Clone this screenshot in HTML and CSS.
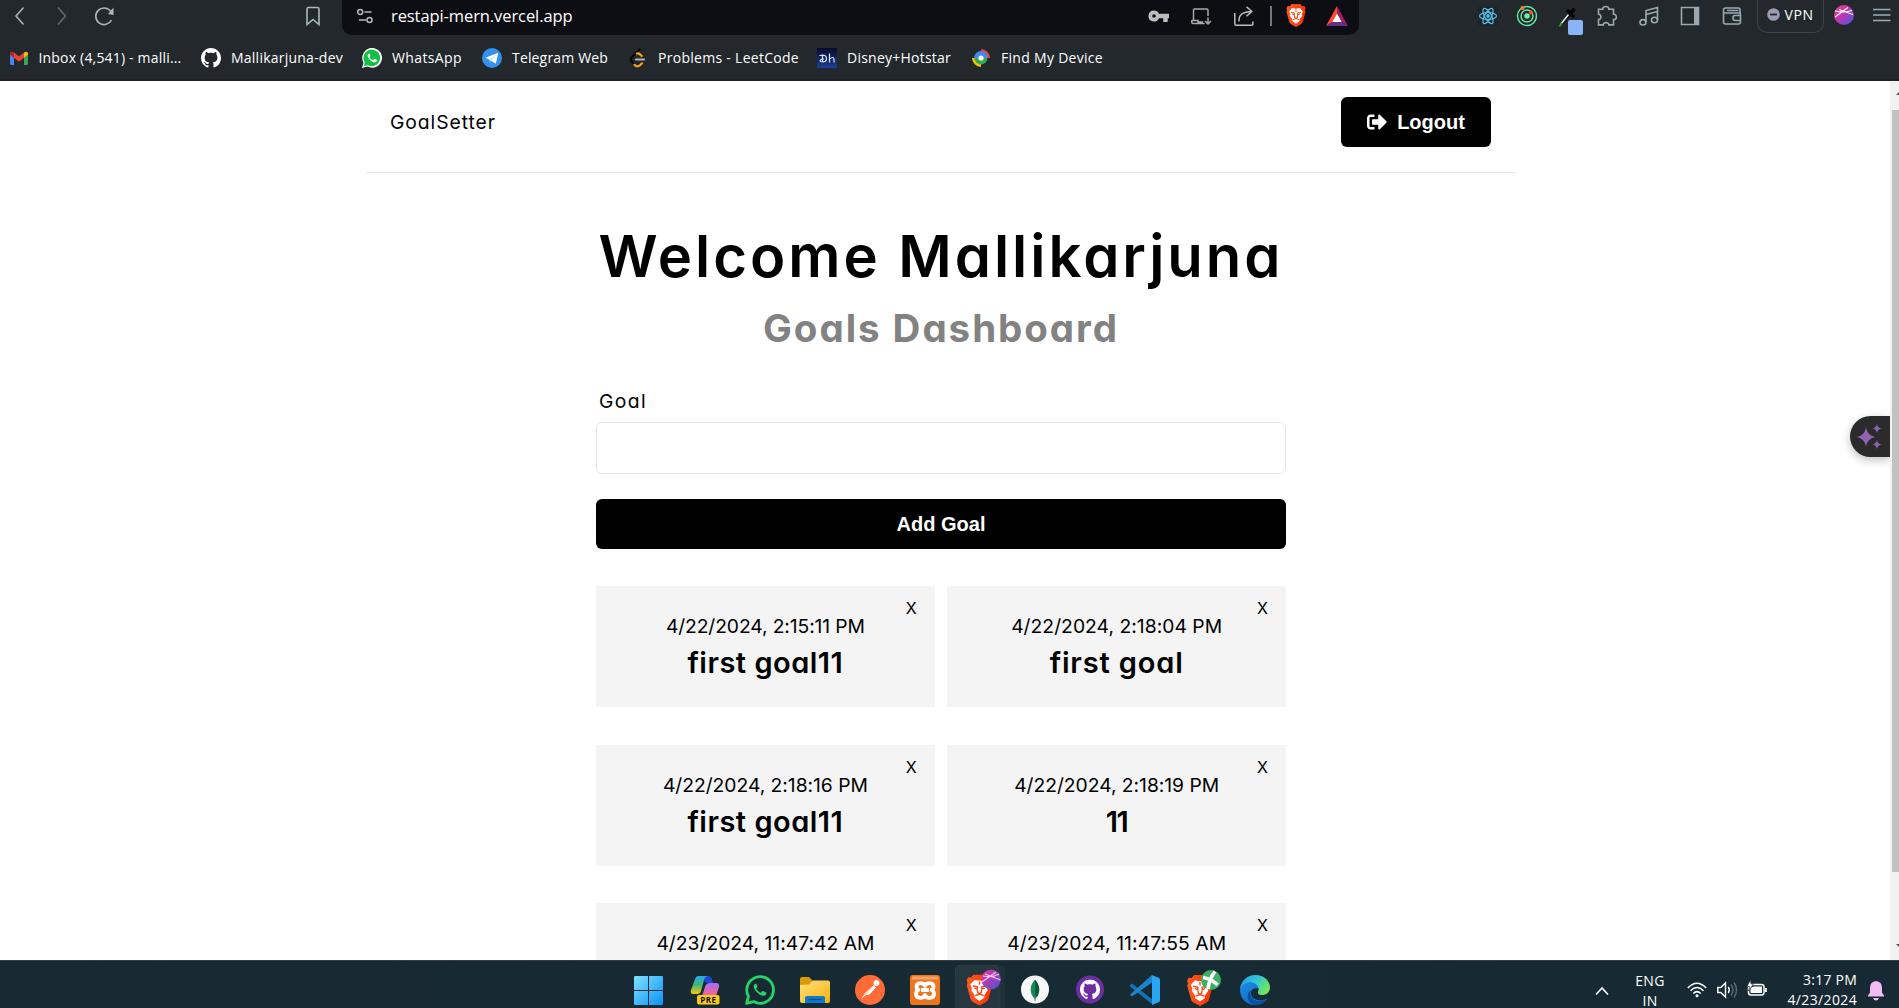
FILE: index.html
```html
<!DOCTYPE html>
<html lang="en">
<head>
<meta charset="utf-8">
<title>Goal Setter</title>
<link rel="stylesheet" href="styles.css">
</head>
<body>
<svg class="defs" width="0" height="0">
  <defs>
    <linearGradient id="braveG" x1="0" x2="1"><stop offset="0" stop-color="#ff5a1f"/><stop offset="1" stop-color="#ff3000"/></linearGradient>
    <linearGradient id="orbG" x1="0" y1="0" x2="1" y2="1"><stop offset=".15" stop-color="#d9369b"/><stop offset=".9" stop-color="#5a50d8"/></linearGradient>
    <linearGradient id="orbT" x1="0" y1="0" x2="1" y2="1"><stop offset="0" stop-color="#f0506a"/><stop offset=".4" stop-color="#cf30a8"/><stop offset="1" stop-color="#3c5ce8"/></linearGradient>
    <linearGradient id="winG" x1="0" y1="0" x2="1" y2="1"><stop offset="0" stop-color="#7fe0ff"/><stop offset="1" stop-color="#0c93f5"/></linearGradient>
    <linearGradient id="folG" x1="0" y1="0" x2="1" y2="1"><stop offset="0" stop-color="#ffe07a"/><stop offset="1" stop-color="#f6b20f"/></linearGradient>
    <linearGradient id="copA" x1="0" y1="0" x2="0" y2="1"><stop offset="0" stop-color="#2aa8f0"/><stop offset=".5" stop-color="#3fb57a"/><stop offset="1" stop-color="#ffc800"/></linearGradient>
    <linearGradient id="copB" x1="0" y1="0" x2="0" y2="1"><stop offset="0" stop-color="#a86af5"/><stop offset="1" stop-color="#f8688a"/></linearGradient>
    <linearGradient id="edgA" x1="0" y1="0" x2="1" y2=".5"><stop offset="0" stop-color="#1d9be6"/><stop offset=".55" stop-color="#35c6d8"/><stop offset="1" stop-color="#6fe65a"/></linearGradient>
    <linearGradient id="edgB" x1="0" y1="0" x2="1" y2="1"><stop offset="0" stop-color="#1b8ee8"/><stop offset="1" stop-color="#0f5cb8"/></linearGradient>
    <linearGradient id="hsG" x1="0" y1="0" x2="0" y2="1"><stop offset="0" stop-color="#070b2a"/><stop offset="1" stop-color="#1c3f96"/></linearGradient>
    <symbol id="github" viewBox="0 0 16 16"><path d="M8 0C3.58 0 0 3.58 0 8c0 3.54 2.29 6.53 5.47 7.59.4.07.55-.17.55-.38 0-.19-.01-.82-.01-1.49-2.01.37-2.53-.49-2.69-.94-.09-.23-.48-.94-.82-1.13-.28-.15-.68-.52-.01-.53.63-.01 1.08.58 1.23.82.72 1.21 1.87.87 2.33.66.07-.52.28-.87.51-1.07-1.78-.2-3.64-.89-3.64-3.95 0-.87.31-1.59.82-2.15-.08-.2-.36-1.02.08-2.12 0 0 .67-.21 2.2.82.64-.18 1.32-.27 2-.27s1.36.09 2 .27c1.53-1.04 2.2-.82 2.2-.82.44 1.1.16 1.92.08 2.12.51.56.82 1.27.82 2.15 0 3.07-1.87 3.75-3.65 3.95.29.25.54.73.54 1.48 0 1.07-.01 1.93-.01 2.2 0 .21.15.46.55.38A8.01 8.01 0 0 0 16 8c0-4.42-3.58-8-8-8z"/></symbol>
    <symbol id="phone" viewBox="0 0 24 24"><path d="M7.2 4.2c-.5-1-.9-1-1.400-1-1 .1-2.800 1.600-2.800 4 0 2 1.300 4.400 4 7.400 3.500 3.800 6.800 5.600 9.600 5.600 2.200 0 4.200-1.600 4.400-3.400.1-.8.1-1-.3-1.300l-4.200-2.100c-.5-.2-.8-.2-1.200.3l-1.500 1.900c-.3.3-.6.4-1 .2-2.400-1-4.700-3-6-5.500-.2-.4-.1-.7.2-1l1.300-1.600c.3-.4.300-.7.100-1.100z"/></symbol>
    <symbol id="lion" viewBox="0 0 20 24">
      <path fill="url(#braveG)" d="M5.500 0h9l2 2.300 2.200-.2 1.300 2.400-.7 2 .6 1.800-3 10.600c-.3 1-1 1.700-1.800 2.300L10 24l-5.100-2.800c-.8-.6-1.500-1.300-1.800-2.300L.1 8.300l.6-1.800L0 4.500l1.300-2.400 2.200.2z"/>
      <path fill="#fff" d="M6 4.200l4 .7 4-.7 3.200 3.600-1.300 2.700.5 1.700-2.800 4 .3 1.600L10 20.500l-3.900-2.700.3-1.600-2.800-4 .5-1.700-1.300-2.700z"/>
      <path fill="none" stroke="#fb4710" stroke-width="1.100" d="M4.800 8.700l3.500.8v1.800l-2.300-.8M15.200 8.700l-3.500.8v1.800l2.300-.8M8.300 11.200l.3 2.800 1.400.9 1.400-.9.3-2.800M6.700 16.300l3.300-1.200 3.300 1.200M10 5.500v2.500"/>
    </symbol>
  </defs>
</svg>

<header class="browser">
  <div class="toolbar">
    <div class="nav">
      <svg width="24" height="24" viewBox="0 0 24 24"><path class="ln lt" d="M15.500 3.500L8 12l7.500 8.500"/></svg>
      <svg class="fwd" width="24" height="24" viewBox="0 0 24 24"><path class="ln dim" d="M8 3.500l7.500 8.500L8 20.500"/></svg>
      <svg class="reload" width="24" height="24" viewBox="0 0 24 24"><path class="ln lt" d="M18.500 7A8.300 8.300 0 1 0 19.500 16"/><path fill="#a9b8c0" d="M21.500 3.500v7.500l-5.500-1z"/></svg>
      <svg class="mark" width="24" height="24" viewBox="0 0 24 24"><path class="ln lt" d="M6 5q0-1.500 1.500-1.500h9q1.500 0 1.500 1.500v15.500l-6-5-6 5z"/></svg>
    </div>
    <div class="address">
      <svg width="18" height="18" viewBox="0 0 18 18" fill="none" stroke="#b9b9bd" stroke-width="1.500"><circle cx="4.200" cy="5" r="2.500"/><path d="M8.500 5h7M3 13h7"/><circle cx="13.500" cy="13" r="2.500"/></svg>
      <span class="url" data-width="181.500">restapi-mern.vercel.app</span>
      <div class="tools">
        <svg width="24" height="24" viewBox="0 0 24 24" fill="#bdbdbd"><path fill-rule="evenodd" d="M7 6.500a5.500 5.500 0 1 0 5 7.700h4.200V18h4.500v-3.800H22V9.800H12A5.500 5.500 0 0 0 7 6.500zm0 3.700a1.800 1.800 0 1 1 0 3.600 1.800 1.800 0 0 1 0-3.600z"/></svg>
        <svg width="24" height="24" viewBox="0 0 24 24" fill="none" stroke="#a9a9ac" stroke-width="1.500"><path d="M4.500 16.500V6q0-1 1-1H18q1 0 1 1v6M3 16.500h6v1.500h5M2.800 16v2.500q0 1 1 1H15.500M19 13.500V19M16 17l3 3 3-3"/></svg>
        <svg width="24" height="24" viewBox="0 0 24 24" fill="none" stroke="#bdbdbd" stroke-width="1.500"><path d="M2.800 9v11q0 1.300 1.300 1.300h15.500q1.300 0 1.300-1.300v-2.500M7 17.500c-.5-6 3-10 13-10M14.500 2.800l5.300 4.700-5.300 4.700"/></svg>
        <i class="sep"></i>
        <svg width="20" height="23"><use href="#lion"/></svg>
        <svg class="bat" width="22" height="20" viewBox="0 0 22 20"><path fill="#ff4a24" d="M11 0L0 20l7.500-4.500L11 8z"/><path fill="#9e1f63" d="M11 0l11 20-7.500-4.500L11 8z"/><path fill="#662d91" d="M0 20h22l-7.500-4.500h-7z"/><path fill="#fff" d="M11 7.500l4.700 8.500H6.300z"/></svg>
      </div>
    </div>
    <div class="ext">
      <svg width="20" height="20" viewBox="0 0 20 20"><rect width="20" height="20" fill="#20232a"/><g fill="none" stroke="#4fb9d9" stroke-width="1.300"><ellipse cx="10" cy="10" rx="8.500" ry="3.300"/><ellipse cx="10" cy="10" rx="8.500" ry="3.300" transform="rotate(60 10 10)"/><ellipse cx="10" cy="10" rx="8.500" ry="3.300" transform="rotate(120 10 10)"/></g><circle cx="10" cy="10" r="1.800" fill="#5cc8ea"/></svg>
      <svg width="22" height="22" viewBox="0 0 22 22" fill="none" stroke="#5ee6a0" stroke-width="1.500"><circle cx="11" cy="11" r="9.500"/><circle cx="11" cy="11" r="6"/><circle cx="11" cy="11" r="2.800" fill="#6af0a8" stroke="none"/><circle cx="6.500" cy="3" r="2" fill="#ff7a2e" stroke="none"/><circle cx="15" cy="7.500" r="2" fill="#f5502a" stroke="none"/></svg>
      <svg class="picker" width="26" height="30" viewBox="0 0 26 30"><path d="M3 21l2-5 7-8 2 2-7 8z" fill="#0b0d0c"/><path d="M3.500 19.500L12 9" stroke="#e9f3ea" stroke-width="1.500"/><path d="M2.500 21.500l2-3.500" stroke="#2e9d3c" stroke-width="1.800"/><path d="M11 6l5 5M13 9l3.500-4" stroke="#050505" stroke-width="3.600" stroke-linecap="round"/><rect x="11" y="15" width="15" height="15" rx="2" fill="#8ab4f8"/></svg>
      <svg width="24" height="24" viewBox="0 0 24 24"><path class="ln" d="M3.500 5.300h4.200c-.5-3.800 6.600-3.800 6.100 0h4.700v4.900c3.800-.4 3.800 5.800 0 5.400v5.300h-4.700c.3-3-5.800-3-5.500 0H3.500v-5.300c3.200.2 3.200-5.600 0-5.400z"/></svg>
      <svg width="24" height="24" viewBox="0 0 24 24"><g class="ln"><ellipse cx="6" cy="18.300" rx="3" ry="2.700"/><ellipse cx="17.500" cy="16" rx="3" ry="2.700"/><path d="M9 18V6.500L20.500 3.500V16M9 10.500l11.500-3"/></g></svg>
      <svg width="24" height="24" viewBox="0 0 24 24"><path class="ln" d="M3.500 3.500h17v17h-17z"/><path d="M16 3h5v18h-5z" fill="#9aa9b1"/></svg>
      <svg width="24" height="24" viewBox="0 0 24 24"><path class="ln" d="M20 9V5.500q0-1.500-1.500-1.500H5.500Q3.500 4 3.500 6v12q0 2 2 2h13q2 0 2-2v-7q0-2-2-2H4M20.500 11.500H15q-2 0-2 2.500t2 2.500h5.500M18.500 6.500H7"/></svg>
    </div>
    <div class="vpn">
      <svg width="13" height="13" viewBox="0 0 13 13"><circle cx="6.500" cy="6.500" r="6.300" fill="#9b9bb3"/><path d="M3 6.500h7" stroke="#22282c" stroke-width="1.800"/></svg>
      <span data-width="29">VPN</span>
    </div>
    <svg class="avatar" width="20" height="20" viewBox="0 0 20 20"><circle cx="10" cy="10" r="10" fill="url(#orbT)"/><path d="M1 12L14 2.500M5 4.500l14 5M1 6q9 2 17-.5" stroke="#fff" stroke-width="1.100" fill="none"/></svg>
    <svg class="menu" width="18" height="14" viewBox="0 0 18 14"><path d="M0 1.500h17.500M0 7h17.500M0 12.500h17.500" stroke="#9cabb3" stroke-width="1.600"/></svg>
  </div>
  <nav class="bookmarks">
    <a class="b1"><svg width="20" height="20" viewBox="0 0 20 20"><path fill="#4285f4" d="M1 6l4 3v8H2.300Q1 17 1 15.700z"/><path fill="#34a853" d="M19 6l-4 3v8h2.700q1.300 0 1.300-1.300z"/><path fill="#ea4335" d="M5 4.500l5 4 5-4v5.200l-5 4-5-4z"/><path fill="#c5221f" d="M1 5.800C1 3.500 3 3 5 4.500v5.200L1 6.800z"/><path fill="#fbbc04" d="M19 5.800c0-2.300-2-2.800-4-1.300v5.200l4-2.900z"/></svg><span data-width="143">Inbox (4,541) - malli...</span></a>
    <a class="b2"><svg width="20" height="20" fill="#fff"><use href="#github"/></svg><span data-width="112">Mallikarjuna-dev</span></a>
    <a class="b3"><svg width="20" height="20" viewBox="0 0 20 20"><path fill="#fff" d="M0 20l1.500-5.300A9.900 9.900 0 1 1 5.500 18.600z"/><path fill="#12c143" d="M1.800 18.200l1-3.800A8.300 8.300 0 1 1 5.800 17.200z"/><use href="#phone" x="4" y="3.800" width="12.500" height="12.500" fill="#fff"/></svg><span data-width="70">WhatsApp</span></a>
    <a class="b4"><svg width="20" height="20" viewBox="0 0 20 20"><circle cx="10" cy="10" r="10" fill="#3390ec"/><path fill="#fff" d="M3.500 9.700L15.300 5q1-.2.8.8l-2 9q-.3 1-1.200.5L7.500 11.700z"/><path d="M7.500 11.700l6-4.700-4.700 5.600-.6 2.900z" fill="#b5d6f7"/></svg><span data-width="96">Telegram Web</span></a>
    <a class="b5"><svg width="20" height="20" viewBox="0 0 20 20" fill="none" stroke-linecap="round" stroke-width="2.200"><path stroke="#080808" d="M11.500 1.500L3.500 9.500q-1.500 2 0 4l3 3"/><path stroke="#ffa116" d="M9 5.500q1.500-.5 3 .8l1.700 1.700M6.500 16.800q2.700 3 5.500.5l2-2"/><path stroke="#b3b3b3" d="M8 11.500h8"/></svg><span data-width="141">Problems - LeetCode</span></a>
    <a class="b6"><svg width="20" height="20" viewBox="0 0 20 20"><rect width="20" height="20" fill="url(#hsG)"/><path d="M2.500 7.500q7-1.500 7 3t-6 3q-1.500-2.500 3.500-2.500M5.500 6.500v7M12.500 5.500v9M12.500 11q4-3 4.500 0v3.500" stroke="#dbe4ff" stroke-width="1.200" fill="none"/></svg><span data-width="104">Disney+Hotstar</span></a>
    <a class="b7"><svg width="20" height="20" viewBox="0 0 20 20" fill="none"><path stroke="#ea4335" stroke-width="3" d="M10 2.500A7.500 7.500 0 0 1 17.500 10"/><path stroke="#fbbc04" stroke-width="3" d="M2.500 10A7.500 7.500 0 0 0 10 17.500"/><path fill="#4285f4" d="M10 3a7 7 0 0 0-7 7h14a7 7 0 0 0-7-7z"/><path fill="#34a853" d="M3.500 10a6.500 6.500 0 0 0 13 0z"/><circle cx="10" cy="10" r="2.600" fill="#fff"/></svg><span data-width="102">Find My Device</span></a>
  </nav>
</header>

<div class="viewport">
  <div class="page">
    <div class="container">
      <header class="site-header">
        <a class="logo" data-width="106">GoalSetter</a>
        <button class="btn logout"><svg width="20" height="20" viewBox="0 0 512 512" fill="#fff"><path d="M497 273L329 441c-15 15-41 4.500-41-17v-96H152c-13.300 0-24-10.700-24-24v-96c0-13.300 10.700-24 24-24h136V88c0-21.400 25.900-32 41-17l168 168c9.300 9.400 9.300 24.600 0 34zM192 436v-40c0-6.600-5.400-12-12-12H96c-17.700 0-32-14.300-32-32V160c0-17.700 14.300-32 32-32h84c6.600 0 12-5.400 12-12V76c0-6.600-5.400-12-12-12H96c-53 0-96 43-96 96v192c0 53 43 96 96 96h84c6.600 0 12-5.400 12-12z"/></svg>Logout</button>
      </header>
      <main class="dashboard">
        <h1><span data-width="685">Welcome Mallikarjuna</span></h1>
        <p class="sub"><span data-width="356">Goals Dashboard</span></p>
        <label for="goal"><span data-width="48">Goal</span></label>
        <input id="goal" type="text">
        <button class="btn add">Add Goal</button>
        <div class="goals">
          <article><i>X</i><div class="date"><span data-width="199">4/22/2024, 2:15:11 PM</span></div><h2><span data-width="156">first goal11</span></h2></article>
          <article><i>X</i><div class="date"><span data-width="211">4/22/2024, 2:18:04 PM</span></div><h2><span data-width="134">first goal</span></h2></article>
          <article><i>X</i><div class="date"><span data-width="205">4/22/2024, 2:18:16 PM</span></div><h2><span data-width="156">first goal11</span></h2></article>
          <article><i>X</i><div class="date"><span data-width="205">4/22/2024, 2:18:19 PM</span></div><h2><span data-width="22">11</span></h2></article>
          <article><i>X</i><div class="date"><span data-width="218">4/23/2024, 11:47:42 AM</span></div></article>
          <article><i>X</i><div class="date"><span data-width="219">4/23/2024, 11:47:55 AM</span></div></article>
        </div>
      </main>
    </div>
    <div class="assistant"><svg width="26" height="26" viewBox="0 0 26 26" fill="#8f62b3"><path d="M10 4.500q1.500 8 9 9.500-7.500 1.500-9 9.500Q8.500 15.500 1 14q7.500-1.500 9-9.500zM21 1q.8 3.900 4.500 4.500Q21.800 6.100 21 10q-.8-3.900-4.500-4.500Q20.200 4.900 21 1zM21 17q.8 3.900 4.500 4.500-3.700.6-4.500 4.500-.8-3.900-4.500-4.500 3.700-.6 4.500-4.500z"/></svg></div>
  </div>
  <div class="scrollbar">
    <svg width="9" height="29" viewBox="0 0 9 29"><path d="M6 14l5-5v5z" fill="#505050"/></svg>
    <div class="thumb"></div>
    <svg width="9" height="21" viewBox="0 0 9 21"><path d="M6 7h5v5z" fill="#505050"/></svg>
  </div>
</div>

<footer class="taskbar">
  <div class="apps">
    <svg class="win" width="29" height="29" viewBox="0 0 29 29" fill="url(#winG)"><path d="M1 0h13v14H0V1q0-1 1-1zM15 0h13q1 0 1 1v13H15zM0 15h14v14H1q-1 0-1-1zM15 15h14v13q0 1-1 1H15z"/></svg>
    <svg width="30" height="30" viewBox="0 0 30 30"><path fill="#1b49d8" d="M8 1h10q3 0 4 3.500L23 8h-6q-2 0-3-3z"/><path fill="url(#copA)" d="M8 1h10q-3 0-4 4l-3 11q-.8 3-4 3H3q-3 0-2-4L5 4q1-3 3-3z"/><path fill="url(#copB)" d="M20 8h6q4 0 3 4l-3 9H12l3-9q1-4 5-4z"/><rect x="7" y="20" width="22.500" height="9.500" rx="2" fill="#ffc91a"/><text class="pre" x="18.300" y="28" text-anchor="middle">PRE</text></svg>
    <svg width="30" height="30" viewBox="0 0 30 30"><path fill="none" stroke="#25d366" stroke-width="2.800" stroke-linejoin="round" d="M1.600 28.400l1.900-7A13.300 13.300 0 1 1 8.700 26.600z"/><use href="#phone" x="6.500" y="6.500" width="17" height="17" fill="#25d366"/></svg>
    <svg width="30" height="30" viewBox="0 0 30 30"><path fill="#dc9a06" d="M0 4q0-2 2-2h7l4 4h-1v5H0z"/><path fill="url(#folG)" d="M0 10l9-.5L13 5.500h15q2 0 2 2V26q0 2-2 2H2q-2 0-2-2z"/><path fill="#0f78c8" d="M5 28v-5q0-2 2-2h16q2 0 2 2v5z"/><path d="M8.500 24.500h13" stroke="#0a4f94" stroke-width="1.300"/></svg>
    <svg width="30" height="30" viewBox="0 0 30 30"><circle cx="15" cy="15" r="15" fill="#ff6c37"/><circle cx="21.500" cy="8" r="2.900" fill="#fff"/><path fill="#fff" d="M19 10l2 2.500-6.500 7-4 .8L6 24.500l4-6.500z"/><path d="M9.500 20l8.500-8.500" stroke="#ff9b78" stroke-width=".8"/></svg>
    <svg width="30" height="30" viewBox="0 0 30 30"><rect width="30" height="30" rx="3" fill="#f0741e"/><path d="M2 1.500h26v3H2z" fill="#f8a36a"/><path fill="none" stroke="#fff" stroke-width="3.800" stroke-linejoin="round" d="M15 11c-1-4-8.500-4-8.500.5 0 2.500 2 3.500 2 3.500s-2.500 1-2.500 4c0 5 8 5 9 1 1 4 9 4 9-1 0-3-2.500-4-2.500-4s2-1 2-3.500c0-4.500-7.500-4.500-8.500-.5zM11 15h8"/></svg>
    <div class="active"><svg width="50" height="43" viewBox="0 0 50 43"><path d="M41 0h3q6 0 6 6v37h-9z" fill="#1f3139"/><rect width="44" height="50" rx="6" fill="#26373f" stroke="#34454d" stroke-width=".8"/><use href="#lion" x="11.500" y="9.500" width="26" height="31"/><circle cx="36" cy="14.500" r="9.800" fill="url(#orbG)"/><path d="M27 17L41 7M30 9l15.500 6M28 11q9 2 16-2" stroke="#f3c5f0" stroke-width="1.200" fill="none"/></svg></div>
    <svg class="mongo" width="28" height="30" viewBox="0 0 28 30"><circle cx="14" cy="14.500" r="14" fill="#f7f8f7"/><path fill="#11895a" d="M14 4.500c-6 6-5.500 15 0 19.500z"/><path fill="#0a5a3f" d="M14 4.500c6 6 5.500 15 0 19.500z"/><path d="M14 20v6" stroke="#4a7a66"/></svg>
    <svg class="gh" width="28" height="30" viewBox="0 0 28 30"><circle cx="14" cy="14.500" r="14" fill="#6e2da0"/><circle cx="14" cy="14.500" r="9.800" fill="#6e2da0"/><use href="#github" x="4" y="4.500" width="20" height="20" fill="#fff"/></svg>
    <svg class="vs" width="30" height="30" viewBox="0 0 30 30"><path fill="#1173b8" d="M0 10l2-1.500 21 16.500v5L0 11.500z"/><path fill="#1b86cf" d="M0 19.500L22 0v7.500L2 21.500z"/><path fill="#2aa5f2" d="M22 0l7 3q1 .5 1 1.500v21q0 1-1 1.500l-7 3z"/></svg>
    <svg class="br2" width="36" height="38" viewBox="0 0 36 38"><use href="#lion" x="0" y="6" width="26" height="31"/><circle cx="24" cy="11" r="10" fill="#3fae62"/><path d="M16 8.500q8 1 14.500 7.500M28 2.500Q22 10 21 20" stroke="#fff" stroke-width="3.600" fill="none"/></svg>
    <svg class="edge" width="30" height="30" viewBox="0 0 30 30"><path fill="url(#edgA)" d="M0 14C1 6 7 0 15.500 0 24 0 30 6 30 12.500c0 5-4 7.500-8 7.500-3.500 0-4.500-1.500-4-3 2-4-1-7-5-7-6 0-10.500 3-13 4z"/><path fill="url(#edgB)" d="M0 14.500C2 9 7 6.500 12 7.500c4 .7 6.500 3.500 6.500 6.500-1-1.500-7.500-1-7.500 4 0 6 8 9.500 16.500 5.500C24.500 28 20 30 15 30 6 30 0 23 0 14.500z"/><path fill="#0b4fa0" d="M11.500 15c-4 7 3.500 15.500 16 8.500C24 29 18 30.500 14 29.800 6 27 6 17.500 11.500 15z"/></svg>
  </div>
  <div class="tray">
    <svg width="14" height="10" viewBox="0 0 14 10"><path d="M1 8.500L7 2l6 6.500" fill="none" stroke="#fff" stroke-width="1.700"/></svg>
    <div class="lang"><span data-width="29.500">ENG</span><span data-width="15">IN</span></div>
    <svg class="wifi" width="20" height="16" viewBox="0 0 20 16" fill="none" stroke="#fff" stroke-width="1.500"><path d="M.8 6Q10-3.500 19.200 6M3.500 8.800q6.500-6.500 13 0M6.300 11.500q3.700-3.700 7.400 0"/><circle cx="10" cy="13.700" r="1.500" fill="#fff" stroke="none"/></svg>
    <svg class="vol" width="21" height="18" viewBox="0 0 21 18" fill="none" stroke="#fff" stroke-width="1.400"><path d="M.8 6.500h3L8.500 2v14l-4.700-4.500h-3zM11.300 6q2 3 0 6"/><path stroke="#5e6d74" d="M14 3.500q4 5.500 0 11M17 1.500q5 7.500 0 15"/></svg>
    <svg class="batt" width="20" height="17" viewBox="0 0 20 17"><rect x="1.500" y="4.500" width="15.500" height="10.500" rx="2.500" fill="none" stroke="#fff" stroke-width="1.500"/><path d="M3.500 8l3-1.500H15v6.500H3.500zM18 8h1.800v4H18z" fill="#fff"/><path d="M3.500 0L0 6.500h2.500L1.500 11 6.500 4H4z" fill="#fff" stroke="#172932" stroke-width=".6"/></svg>
    <div class="clock"><span data-width="54">3:17 PM</span><span data-width="69.500">4/23/2024</span></div>
    <svg class="bell" width="16" height="20" viewBox="0 0 16 20" fill="#efbdf2"><path d="M8 0q6 .5 6 7v4.500l2 3v1H0v-1l2-3V7Q2 .5 8 0zM5 17h6q-.8 2.500-3 2.500T5 17z"/></svg>
  </div>
</footer>
<script src="fit.js"></script>
</body>
</html>
```
FILE: styles.css
```css
* { box-sizing: border-box; margin: 0; padding: 0; }
body {
  width: 1899px;
  height: 1008px;
  overflow: hidden;
  display: flex;
  flex-direction: column;
  background: #fff;
  color: #000;
  font-family: Inter, sans-serif;
}
svg { display: block; flex: none; }
i { font-style: normal; }
.defs { position: absolute; }
[data-width] { display: inline-block; white-space: nowrap; }

/* Browser chrome */
.browser {
  height: 81px;
  flex: none;
  background: #22282c;
  border-bottom: 2px solid #1f2227;
  color: #fff;
  font-family: "Open Sans", sans-serif;
}
.toolbar { display: flex; height: 35px; }
.toolbar > * { height: 31px; }
.nav { width: 342px; display: flex; align-items: center; padding-left: 8px; }
.fwd { margin-left: 18px; }
.reload { margin-left: 18px; }
.mark { margin-left: 185px; }
.ln { fill: none; stroke: #9aa9b1; stroke-width: 1.6; }
.lt { stroke: #a9b8c0; }
.dim { stroke: #5f686d; }
.toolbar > .address {
  width: 1017px;
  height: 35px;
  padding: 0 11px 4px 14px;
  display: flex;
  align-items: center;
  background: #0d0e13;
  border-radius: 0 0 10px 10px;
}
.url { margin-left: 17px; font-size: 16.5px; line-height: 24px; }
.tools { margin-left: auto; display: flex; align-items: center; gap: 18.5px; }
.sep { width: 1.5px; height: 20px; background: #77787c; margin: 0 -4.5px 0 -4px; }
.bat { margin-left: 2px; }
.ext { display: flex; align-items: center; margin-left: 119px; gap: 17.5px; }
.picker { margin: 9px -5.5px 0 2px; }
.vpn {
  width: 67px;
  margin-left: 13px;
  display: flex;
  align-items: center;
  padding: 0 0 3px 9px;
  gap: 5px;
  border: 1px solid #3b464a;
  border-top: 0;
  border-radius: 0 0 10px 10px;
  font-size: 14px;
}
.toolbar > .vpn { height: 33px; }
.toolbar > .avatar { height: 20px; margin: 5px 0 0 10px; }
.toolbar > .menu { height: 14px; margin: 8px 0 0 19px; }
.bookmarks { display: flex; height: 46px; align-items: center; font-size: 14px; line-height: 20px; }
.bookmarks a { display: flex; align-items: center; gap: 10px; height: 22px; flex: none; }
.b1 { width: 192.500px; margin-left: 8.500px; }
.b2 { width: 161px; }
.b3 { width: 120px; }
.b4 { width: 146px; }
.b5 { width: 189px; }
.b6 { width: 154px; }

/* Page */
.viewport { flex: 1; min-height: 0; display: flex; overflow: hidden; }
.page { width: 1890px; position: relative; height: 879px; overflow: hidden; }
.container { width: 1150px; margin-left: 366px; }
.site-header {
  display: flex;
  justify-content: space-between;
  align-items: center;
  height: 92px;
  padding: 16px 25px 25px 24px;
  border-bottom: 1px solid #e6e6e6;
}
.logo, label, .date { font-size: 19.3px; font-weight: 400; }
.logo, label, .date, h1, h2, .sub { font-feature-settings: "cv11"; }
.btn {
  border: 0;
  border-radius: 6px;
  background: #000;
  color: #fff;
  font: 700 20px/24px "Liberation Sans", Arial, sans-serif;
  height: 50px;
}
.logout { width: 150px; display: flex; align-items: center; justify-content: center; gap: 10px; }
.dashboard { width: 690px; margin: 53px auto 0; display: flex; flex-direction: column; }
h1 { font-size: 58px; line-height: 60px; font-weight: 600; text-align: center; }
.sub { margin-top: 17px; font-size: 38.500px; line-height: 50px; font-weight: 700; color: #828282; text-align: center; }
label { margin: 36px 0 0 3px; line-height: 24px; }
input { margin-top: 9px; height: 52px; border: 1px solid #e6e6e6; border-radius: 6px; background: #fff; }
.add { margin-top: 25px; }
.goals { margin-top: 37px; display: grid; grid-template-columns: 1fr 1fr; gap: 37.500px 12.500px; }
article { position: relative; height: 121.200px; background: #f4f4f4; padding-top: 25px; text-align: center; }
article i { position: absolute; top: 12px; right: 18px; font-size: 16px; line-height: 20px; }
.date { line-height: 30px; }
h2 { margin-top: 2px; font-size: 29px; line-height: 40px; font-weight: 600; }
.assistant {
  position: absolute;
  top: 335px;
  right: 0;
  width: 40px;
  height: 41px;
  padding: 7px 0 0 6px;
  background: #2b2b2b;
  border-radius: 21px 0 0 21px;
  box-shadow: 0 3px 10px rgba(0, 0, 0, .25);
}
.scrollbar { width: 9px; background: #f1f1f1; display: flex; flex-direction: column; }
.thumb { height: 762px; margin: 0 0 65px 2px; background: #c1c1c1; flex: none; }
.scrollbar svg { overflow: hidden; }

/* Taskbar */
.taskbar {
  height: 48px;
  flex: none;
  display: flex;
  border-top: 1px solid #2e4145;
  background: linear-gradient(90deg, #182830, #172b34 60%, #172932);
  color: #fff;
  font-family: "Open Sans", sans-serif;
}
.apps { display: flex; padding-left: 634px; gap: 25px; align-items: flex-start; padding-top: 14px; }
.apps .win { margin: 1px 2px 0 0; }
.pre { font: 700 8px "Open Sans", sans-serif; letter-spacing: .4px; fill: #111; }
.active { margin: -10px 0 0 -10px; }
.apps .mongo { margin-left: -9px; }
.apps .gh { margin-left: 2px; }
.apps .vs { margin-left: 1px; }
.apps .br2 { margin: -6px 0 0 2px; }
.apps .edge { margin-left: -8px; }
.tray { display: flex; margin-left: auto; padding: 14px 15px 0 0; font-size: 14px; line-height: 20px; align-items: flex-start; }
.tray > svg:first-child { margin-top: 11px; }
.lang { width: 30px; margin: -4px 0 0 26px; display: flex; flex-direction: column; align-items: center; }
.wifi { margin: 7px 0 0 22px; }
.vol { margin: 6px 0 0 10px; }
.batt { margin: 5px 0 0 9px; }
.clock { width: 70px; margin: -5px 0 0 20px; display: flex; flex-direction: column; align-items: flex-end; }
.bell { margin: 6px 0 0 11px; }
```
FILE: fit.js
```js
// Tracks each label out or in so that it fills its design width.
document.querySelectorAll('[data-width]').forEach(function (el) {
  var extra = Number(el.dataset.width) - el.getBoundingClientRect().width;
  el.style.letterSpacing = (extra / el.textContent.length) + 'px';
});
```
